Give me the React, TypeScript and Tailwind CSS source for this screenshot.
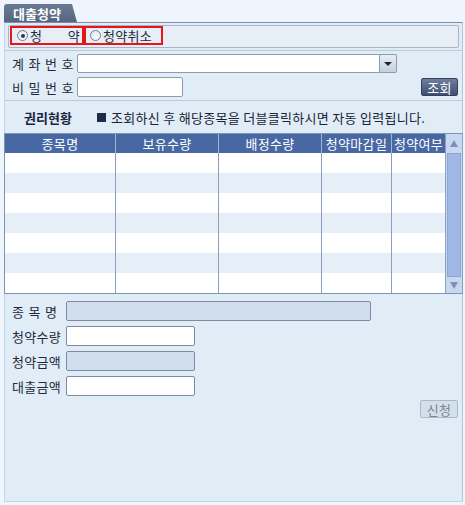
import React from 'react';

const font = "font-['Noto_Sans_CJK_KR','Noto_Sans',sans-serif]";

const Radio = ({ checked }: { checked?: boolean }) => (
  <span className="flex h-[11px] w-[11px] shrink-0 items-center justify-center rounded-full border border-[#6f7c8e] bg-gradient-to-br from-[#dfe5ec] to-white">
    {checked && <span className="h-[4px] w-[4px] rounded-full bg-[#1f3a5e]" />}
  </span>
);

const columns = [
  { label: '종목명', w: 'w-[111px]' },
  { label: '보유수량', w: 'w-[103px]' },
  { label: '배정수량', w: 'w-[103px]' },
  { label: '청약마감일', w: 'w-[70px]' },
  { label: '청약여부', w: 'w-[53px]' },
];

const rows = [0, 1, 2, 3, 4, 5, 6];

const App = () => {
  return (
    <div className={`h-[505px] w-[465px] bg-[#eef5fd] pl-[4px] pr-[2px] pt-[4px] text-[13px] leading-none tracking-[0.3px] text-[#1f2a3c] ${font}`}>
      {/* tab */}
      <div className="flex h-[18px] w-[73px] items-center rounded-tl-[3px] bg-gradient-to-b from-[#6b7b93] to-[#55657d] pl-[9px] text-[13px] font-bold tracking-normal text-white [clip-path:polygon(0_0,68px_0,73px_18px,0_18px)]">
        대출청약
      </div>

      {/* panel */}
      <div className="box-border flex h-[480px] flex-col border-b border-l border-r border-t border-b-[#c2d6f2] border-l-[#c2d6f2] border-r-[#b6c6da] border-t-[#7d8da3] bg-[#e1edf6]">
        {/* radio row */}
        <div className="border-b border-[#bccbdc] px-[3px] pb-[2px] pt-[2px]">
          <div className="flex h-[23px] rounded-[2px] border border-[#a9b5c5] bg-[#e8eef6] pl-[1px]">
            <div className="box-border flex h-[19px] w-[74px] items-center border-2 border-[#e8141c] pl-[5px]">
              <Radio checked />
              <span className="ml-[2px] flex w-[50px] justify-between">
                <span>청</span>
                <span>약</span>
              </span>
            </div>
            <div className="box-border flex h-[19px] w-[79px] items-center border-2 border-[#e8141c] pl-[4px]">
              <Radio />
              <span className="ml-[2px]">청약취소</span>
            </div>
          </div>
        </div>

        {/* account section */}
        <div className="flex flex-col gap-[4px] border-b border-[#bccbdc] pb-[3px] pl-[7px] pr-[4px] pt-[3px]">
          <div className="flex h-[19px] items-center">
            <span className="w-[65px] tracking-[0.8px]">계 좌 번 호</span>
            <div className="h-[19px] w-[303px] rounded-l-[2px] border border-[#8f9bab] bg-white" />
            <div className="flex h-[19px] w-[17px] items-center justify-center rounded-r-[2px] border border-l-0 border-[#8f9bab] bg-gradient-to-b from-[#e6edf5] to-[#c3d1e1]">
              <span className="border-x-[4px] border-t-[4px] border-x-transparent border-t-[#222]" />
            </div>
          </div>
          <div className="flex h-[20px] items-center">
            <span className="w-[65px] tracking-[0.8px]">비 밀 번 호</span>
            <div className="h-[20px] w-[106px] rounded-[2px] border border-[#8f9bab] bg-white" />
            <button className="ml-auto flex h-[18px] w-[37px] items-center justify-center rounded-[2px] border border-[#33415e] bg-gradient-to-b from-[#6e7e9e] to-[#3f4f73] text-[13px] text-white">
              조회
            </button>
          </div>
        </div>

        {/* info row */}
        <div className="flex h-[32px] items-center pl-[19px]">
          <span className="w-[73px] font-bold tracking-normal text-[#1b2440]">권리현황</span>
          <span className="mr-[5px] h-[9px] w-[9px] bg-[#1d2a48]" />
          <span className="text-[#1a2236]">조회하신 후 해당종목을 더블클릭하시면 자동 입력됩니다.</span>
        </div>

        {/* table */}
        <div className="-mx-px flex border-b border-t border-[#7f93b5]">
          <div className="flex flex-col border-l border-[#7f93b5]">
            <div className="flex h-[19px] bg-[#4868a4]">
              {columns.map((c, i) => (
                <div
                  key={c.label}
                  className={`${c.w} flex items-center justify-center whitespace-nowrap text-white ${i < 4 ? 'border-r border-[#a3b4d2]' : ''}`}
                >
                  {c.label}
                </div>
              ))}
            </div>
            {rows.map((r) => (
              <div key={r} className={`flex h-[20px] ${r % 2 === 1 ? 'bg-[#e6eef7]' : 'bg-white'}`}>
                {columns.map((c, i) => (
                  <div key={c.label} className={`${c.w} ${i < 4 ? 'border-r border-[#8a9ec0]' : ''}`} />
                ))}
              </div>
            ))}
          </div>
          {/* scrollbar */}
          <div className="flex w-[18px] flex-col border-x border-[#8aa0c4] bg-[#c8d8ef]">
            <div className="flex h-[19px] items-center justify-center">
              <span className="border-x-[4px] border-b-[7px] border-x-transparent border-b-[#7d90b6]" />
            </div>
            <div className="mx-[1px] h-[124px] border border-[#8ea6d6] bg-[#a1b7e6]" />
            <div className="flex flex-1 items-center justify-center">
              <span className="border-x-[4px] border-t-[7px] border-x-transparent border-t-[#7d90b6]" />
            </div>
          </div>
        </div>

        {/* bottom form */}
        <div className="flex flex-col gap-[5px] pl-[7px] pr-[4px] pt-[7px]">
          <div className="flex h-[20px] items-center">
            <span className="w-[54px] tracking-[0.8px]">종 목 명</span>
            <div className="h-[20px] w-[305px] rounded-[2px] border border-[#7c8ba0] bg-[#d1deed]" />
          </div>
          <div className="flex h-[20px] items-center">
            <span className="w-[54px]">청약수량</span>
            <div className="h-[20px] w-[129px] rounded-[2px] border border-[#7c8ba0] bg-white" />
          </div>
          <div className="flex h-[20px] items-center">
            <span className="w-[54px]">청약금액</span>
            <div className="h-[20px] w-[129px] rounded-[2px] border border-[#7c8ba0] bg-[#d1deed]" />
          </div>
          <div className="flex h-[20px] items-center">
            <span className="w-[54px]">대출금액</span>
            <div className="h-[20px] w-[129px] rounded-[2px] border border-[#7c8ba0] bg-white" />
          </div>
          <div className="flex justify-end">
            <button className="-mt-[1px] flex h-[18px] w-[38px] items-center justify-center rounded-[2px] border border-[#a9b9cd] bg-[#d3dfeb] text-[13px] text-[#7a879a]">
              신청
            </button>
          </div>
        </div>
      </div>
    </div>
  );
};

export default App;
